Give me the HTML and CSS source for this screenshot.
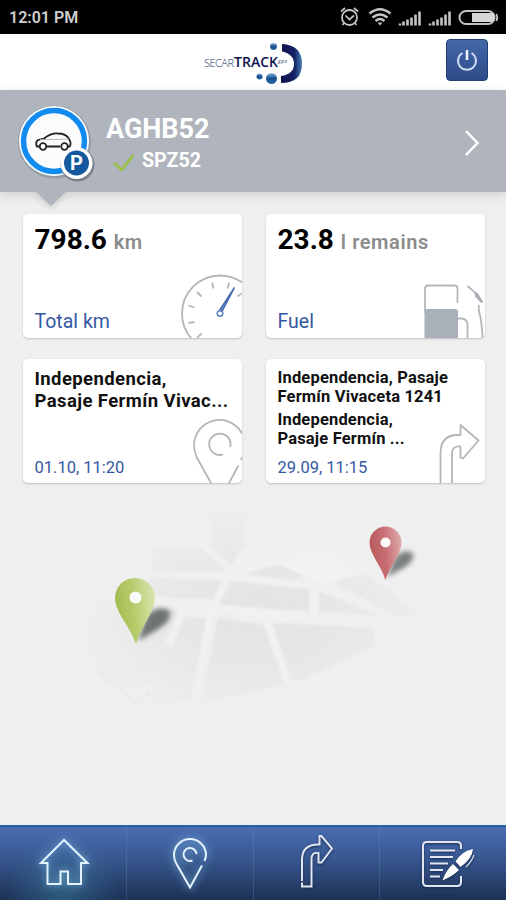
FILE: index.html
```html
<!DOCTYPE html>
<html lang="en">
<head>
    <meta charset="UTF-8">
    <meta name="viewport" content="width=device-width, initial-scale=1.0">
    <title>SecarTrack</title>
    <link rel="stylesheet" href="styles.css">
</head>
<body>
    <div class="status-bar">
        <span class="clock">12:01 PM</span>
        <svg class="status-icons" width="162" height="22" viewBox="0 0 162 22" fill="none" stroke="#c4c4c4">
            <!-- alarm -->
            <circle cx="9.5" cy="11.5" r="7.5" stroke-width="1.8"/>
            <path d="M5.5 9.5l4 4 4.5-4M1 5.5l4-3.5M18 5.5l-4-3.5M4 17l-1.5 2M15 17l1.5 2" stroke-width="1.7"/>
            <!-- wifi -->
            <path d="M29.5 7.5q10.5-8.5 21 0M32.5 11.5q7.5-6 15 0M35.5 15q4.5-4 9 0" stroke-width="2.4"/>
            <path d="M37.5 16.5h5l-2.5 3z" fill="#c4c4c4" stroke="none"/>
            <!-- signal -->
            <path d="M60 19.5v-2M63.5 19.5v-4M67.5 19.5v-6M71.5 19.5v-8M75.5 19.5v-11M79.5 19.5v-14" stroke-width="2.6"/>
            <path d="M90 19.5v-2M93.5 19.5v-4M97.5 19.5v-6M101.5 19.5v-8M105.5 19.5v-11M109.5 19.5v-14" stroke-width="2.6"/>
            <!-- battery -->
            <rect x="119.5" y="5" width="35" height="13" rx="6.5" stroke-width="2"/>
            <path d="M132 7h19.5q3 0 3 4.5t-3 4.5h-19.5z" fill="#d6d6d6" stroke="none"/>
            <path d="M156.5 8q1.5 3.5 0 7" stroke-width="1.8"/>
        </svg>
    </div>

    <header class="header">
        <svg class="logo" width="106" height="48" viewBox="0 0 106 48">
            <defs>
                <linearGradient id="arc" x1="0" y1="0" x2="1" y2="0">
                    <stop offset="0" stop-color="#10104f"/>
                    <stop offset=".65" stop-color="#132364"/>
                    <stop offset="1" stop-color="#4b7fba"/>
                </linearGradient>
                <linearGradient id="ball" x1="0" y1="0" x2="0" y2="1">
                    <stop offset="0" stop-color="#8db7d8"/>
                    <stop offset=".5" stop-color="#164f8e"/>
                    <stop offset="1" stop-color="#2c6ca8"/>
                </linearGradient>
            </defs>
            <path d="M82 4Q102 5 102 24T81 43V36Q94 34 94 24T82 11.500z" fill="url(#arc)"/>
            <circle cx="73.5" cy="6.5" r="3.4" fill="url(#ball)"/>
            <circle cx="59.5" cy="36.5" r="3" fill="url(#ball)"/>
            <circle cx="71.5" cy="38.5" r="5.5" fill="url(#ball)"/>
            <text class="logo-thin" x="4" y="27" textLength="30">SECAR</text>
            <text class="logo-bold" x="34" y="27" textLength="44">TRACK</text>
            <text class="logo-gps" x="78" y="23" textLength="9">gps</text>
        </svg>
        <button class="power-btn" type="button" aria-label="Log out">
            <svg width="26" height="26" viewBox="0 0 26 26" fill="none" stroke="#c9d9f2" stroke-width="2">
                <path d="M8.5 6A9 9 0 1 0 17.5 6"/>
                <path d="M13 3v10" stroke="#eef4ff" stroke-width="2.5"/>
            </svg>
        </button>
    </header>

    <section class="vehicle">
        <svg class="vehicle-icon" width="84" height="84" viewBox="0 0 84 84">
            <circle cx="38.5" cy="41" r="36.5" fill="#878d94" opacity=".65"/>
            <circle cx="38" cy="40" r="35" fill="#fff"/>
            <circle cx="38" cy="40" r="30.5" fill="#fbfbfb" stroke="#128bf0" stroke-width="5.5"/>
            <path d="M23.5 45.5h-2.5q-2-4 1-6.5l6-1.5q7-5.5 14-5 8 0 11 5.5 3 5 .5 7.5h-1.5M30.5 45.5h13.5" fill="none" stroke="#222" stroke-width="1.8"/>
            <path d="M24 38.5h19q6-.5 10-.5" fill="none" stroke="#aaa" stroke-width=".8"/>
            <circle cx="27" cy="45.5" r="3.3" fill="#fff" stroke="#222" stroke-width="1.8"/>
            <circle cx="48.5" cy="45.5" r="3.3" fill="#fff" stroke="#222" stroke-width="1.8"/>
            <circle cx="61.5" cy="63.5" r="17" fill="#6d747c" opacity=".8"/>
            <circle cx="60.5" cy="62" r="16" fill="#fff"/>
            <circle cx="60.5" cy="62" r="12.5" fill="#155a9f"/>
            <text class="parking" x="60.5" y="69" text-anchor="middle">P</text>
        </svg>
        <div class="vehicle-text">
            <div class="vehicle-name">AGHB52</div>
            <div class="vehicle-plate">
                <svg width="22" height="20" viewBox="0 0 22 20" fill="none" stroke="#96c23c" stroke-width="2.5">
                    <path d="M1 10l7.5 7L20.5 2"/>
                </svg>
                SPZ52
            </div>
        </div>
        <svg class="chevron" width="16" height="28" viewBox="0 0 16 28" fill="none" stroke="#fff" stroke-width="2.5">
            <path d="M2 2l11.5 12L2 26"/>
        </svg>
    </section>

    <main class="cards">
        <div class="card">
            <div class="value">798.6 <span class="unit">km</span></div>
            <div class="label">Total km</div>
            <svg class="card-icon" width="62" height="65" viewBox="0 0 62 65" fill="none" stroke="#b3b6b9" stroke-width="1.8">
                <circle cx="40" cy="40.5" r="38"/>
                <path d="M33.5 15.5l-1.5-6M47.5 15.5l1.5-6M21.5 23.5l-4.5-4.5M14.5 34.5l-6-2M14.5 49l-6 1M21.5 60.5l-4.5 4.5M57.5 23.5l4-3"/>
                <path d="M39.5 37.5L54.5 14.5 42 38.5" fill="#7795cc" stroke="#4469ae" stroke-width="1.5"/>
                <circle cx="40" cy="40.5" r="2.8" fill="#fff" stroke="#5a7fbd" stroke-width="1.5"/>
            </svg>
        </div>
        <div class="card">
            <div class="value">23.8 <span class="unit fuel">l remains</span></div>
            <div class="label">Fuel</div>
            <svg class="card-icon" width="62" height="55" viewBox="0 0 62 55" fill="none" stroke="#b3b7bb" stroke-width="1.8">
                <path d="M2 30V5.5Q2 2.5 5 2.5h26.5q3 0 3 3V20"/>
                <path d="M1.5 55V29q0-3 3-3h27.5q3 0 3 3v26z" fill="#aab0b8" stroke="none"/>
                <path d="M35 35.5h3.5q6 0 6 7V55M56 22q-1 5 1 10 2 9 2.5 23"/>
                <path d="M44.5 3l8 7 7 9"/>
                <path d="M51.5 9.5l3 0 6 10-3 0-5.5-6z" fill="#aab0b8" stroke="none"/>
            </svg>
        </div>
        <div class="card">
            <div class="address">Independencia,<br>Pasaje Fermín Vivac...</div>
            <div class="label date">01.10, 11:20</div>
            <svg class="card-icon" width="50" height="65" viewBox="0 0 50 65" fill="none" stroke="#b3b6b9" stroke-width="1.8">
                <path d="M19 65L4.5 39Q2 33 2 28A25.5 25.5 0 0 1 50 15.5M46.5 47.5L37 65M49 42l1-3"/>
                <path d="M38.2 29A10.7 10.7 0 1 0 31 36.5"/>
            </svg>
        </div>
        <div class="card">
            <div class="address small">Independencia, Pasaje<br>Fermín Vivaceta 1241</div>
            <div class="address small">Independencia,<br>Pasaje Fermín ...</div>
            <div class="label date">29.09, 11:15</div>
            <svg class="card-icon" width="47" height="60" viewBox="0 0 47 60" fill="none" stroke="#b3b6b9" stroke-width="1.8" stroke-linejoin="round">
                <path d="M2.5 60V29.5Q3 13 18 12h4.5V2L40.5 17.5 25 35.5 22.5 34.5V23.5Q14 22.5 14 31V60"/>
            </svg>
        </div>
    </main>

    <svg class="map" width="506" height="250" viewBox="0 0 506 250">
        <defs>
            <radialGradient id="fade" gradientUnits="userSpaceOnUse" cx="260" cy="120" r="185" gradientTransform="translate(0 48) scale(1 .6)">
                <stop offset="0" stop-color="#fff"/>
                <stop offset=".35" stop-color="#fff" stop-opacity=".8"/>
                <stop offset="1" stop-color="#fff" stop-opacity="0"/>
            </radialGradient>
            <mask id="map-mask"><rect width="506" height="250" fill="url(#fade)"/></mask>
            <linearGradient id="green" x1="0" y1=".6" x2="1" y2=".4">
                <stop offset="0" stop-color="#a0b94c"/>
                <stop offset=".5" stop-color="#b7cd6e"/>
                <stop offset="1" stop-color="#d6e4ac"/>
            </linearGradient>
            <linearGradient id="red" x1="0" y1=".6" x2="1" y2=".4">
                <stop offset="0" stop-color="#b9585d"/>
                <stop offset=".5" stop-color="#c76d72"/>
                <stop offset="1" stop-color="#dca9ab"/>
            </linearGradient>
            <filter id="blur" x="-30%" y="-30%" width="160%" height="160%"><feGaussianBlur stdDeviation="2.5"/></filter>
            <filter id="soften"><feGaussianBlur stdDeviation="1"/></filter>
        </defs>
        <g mask="url(#map-mask)" filter="url(#soften)">
            <path d="M155 51h49l26 24-80 2zM211 18h34v40l-12 14-22-21zM150 82l72 4-8 18-66-2zM229 86l80 6v24l-90-6zM319 96l59 24-59-3zM334 88l30-12 55 45-22 1zM100 106l80 10-14 60-50 36-45-40zM185 121l24 3-18 80-40 3 15-40zM218 123l46 7 21 60-84 18zM272 128l102 5v27l-80 30zM240 80l54-18 18 15-20 9z" fill="#e4e3e3"/>
            <path d="M272 67l55-17 42 27-44 12z" fill="#f4f4f4"/>
            <g fill="none" stroke="#f2f1f1" stroke-width="7">
                <path d="M150 79l84 3 85 10 75 30M150 104l80 10 60 9 98 5M228 84l-16 30-18 92M232 76l-30-27h-50l-12 30M233 75l12-22M267 126l22 65M314 93v34M201 215l95-24 95-42M183 116l-15 34"/>
                <path d="M234 79l94-30 62 42"/>
            </g>
        </g>
        <path d="M118 161l-20 15 40 34 12-14" fill="none" stroke="#ebebeb" stroke-width="3"/>
        <path d="M138 146l9-26q13-11 23-4 2 9-10 17z" fill="#3e4242" opacity=".7" filter="url(#blur)"/>
        <path d="M136 149C130 131 115 117 115 103a20 20 0 0 1 40 0C155 117 141 131 136 149z" fill="url(#green)"/>
        <circle cx="135.5" cy="102.5" r="6" fill="#fafafa"/>
        <path d="M387 82l8-20q10-9 18-4 2 7-8 14z" fill="#3e4242" opacity=".65" filter="url(#blur)"/>
        <path d="M385.5 85C381 70 369.5 59 369.5 47.5a16 16 0 0 1 32 0C401.5 59 390 70 385.5 85z" fill="url(#red)"/>
        <circle cx="385.5" cy="47.5" r="5" fill="#fafafa"/>
    </svg>

    <nav class="tabs">
        <a class="tab active" href="#" aria-label="Home">
            <svg width="60" height="60" viewBox="0 0 60 60" fill="none" stroke="#e2f3ff" stroke-width="2">
                <path d="M31 8L8 31h6.5v21h13V39.5h7.5V52h13V31h6.5z"/>
            </svg>
        </a>
        <a class="tab glow" href="#" aria-label="Location">
            <svg width="60" height="60" viewBox="0 0 60 60" fill="none" stroke="#e2f3ff" stroke-width="2">
                <path d="M44.5 29Q46 25 46 23A16 16 0 1 0 14 23Q14 27 16 31L30 55.5 42 33.5"/>
                <path d="M36.5 22A6.5 6.5 0 1 0 32.5 28.5"/>
            </svg>
        </a>
        <a class="tab" href="#" aria-label="Trips">
            <svg width="60" height="60" viewBox="0 0 60 60" fill="none" stroke="#e1e6f0" stroke-width="2">
                <path d="M16 50.5V54.5H25.5V27Q25.5 20 32.5 21v9.5h3L46 16.5 35.5 4h-2v8.5Q16.5 12 16 27v22"/>
            </svg>
        </a>
        <a class="tab" href="#" aria-label="Logbook">
            <svg width="60" height="60" viewBox="0 0 60 60" fill="none" stroke="#e1e6f0" stroke-width="2">
                <path d="M48 17v-3q0-4-4-4H14q-4 0-4 4v36q0 4 4 4h30q4 0 4-4v-6"/>
                <path d="M17 18.5h25M17 25h23M17 31.5h18M17 38h13M17 44.5h10"/>
                <path d="M29.5 48.5Q33 38 40 32l6 6Q40 44 29.5 48.5zM42.5 29.5Q49 19 60 17 59 27 47.5 35z" fill="#fff" stroke="none"/>
                <path d="M61 23q-2 6-8 12" stroke-width="1.2"/>
            </svg>
        </a>
    </nav>
</body>
</html>
```
FILE: styles.css
```css
* {
    box-sizing: border-box;
}
body {
    margin: 0;
    width: 506px;
    height: 900px;
    display: flex;
    flex-direction: column;
    background-color: #efefef;
    font-family: Roboto, "Liberation Sans", sans-serif;
    overflow: hidden;
}
svg {
    display: block;
    overflow: visible;
    flex: none;
}
.status-bar {
    height: 34px;
    padding: 0 4px 0 9px;
    display: flex;
    align-items: center;
    justify-content: space-between;
    background-color: #000;
    color: #cfcfcf;
}
.clock {
    font-size: 16px;
    font-weight: 600;
    line-height: 20px;
    padding-top: 2px;
}
.status-icons {
    overflow: hidden;
}
.header {
    height: 56px;
    padding: 5px 18px 0 200px;
    display: flex;
    align-items: flex-start;
    justify-content: space-between;
    background-color: #fff;
}
.logo-thin {
    font: 300 11px "Open Sans", sans-serif;
    fill: #27316b;
}
.logo-bold {
    font: 600 14px "Open Sans", sans-serif;
    fill: #10104f;
}
.logo-gps {
    font: italic 5px "Open Sans", sans-serif;
    fill: #27316b;
}
.logo {
    margin-top: 1px;
}
.power-btn {
    width: 42px;
    height: 42px;
    padding: 0;
    display: flex;
    align-items: center;
    justify-content: center;
    background: linear-gradient(#4467a8, #2c4b88);
    border: 1px solid #243e72;
    border-radius: 4px;
}
.vehicle {
    position: relative;
    height: 102px;
    padding: 11px 26px 0 16px;
    display: flex;
    background-color: #b0b5bd;
    box-shadow: 0 3px 10px rgba(0, 0, 0, .14);
}
.vehicle::after {
    content: "";
    position: absolute;
    left: 35px;
    top: 101px;
    border: 16px solid transparent;
    border-top: 15px solid #b0b5bd;
    border-bottom: 0;
    filter: drop-shadow(0 3px 3px rgba(0, 0, 0, .12));
}
.parking {
    font: bold 20px Roboto, sans-serif;
    fill: #fff;
}
.vehicle-text {
    flex: 1;
    padding: 12px 0 0 6px;
    color: #fff;
    font-weight: bold;
}
.vehicle-name {
    font-size: 27px;
    line-height: 32px;
}
.vehicle-plate {
    display: flex;
    align-items: center;
    gap: 7px;
    padding-left: 7px;
    font-size: 19.7px;
    line-height: 31px;
}
.vehicle-plate svg {
    margin-top: 4px;
}
.chevron {
    margin-top: 28px;
}
.cards {
    display: grid;
    grid-template-columns: 219px 219px;
    grid-template-rows: 124px 124px;
    gap: 21px 24px;
    padding: 21.5px 0 0 23px;
}
.card {
    position: relative;
    padding: 9px 12px 5px 11.5px;
    display: flex;
    flex-direction: column;
    background-color: #fff;
    border-radius: 5px;
    box-shadow: 0 1px 2px rgba(0, 0, 0, .2);
}
.card-icon {
    position: absolute;
    right: 0;
    bottom: 0;
    overflow: hidden;
    border-bottom-right-radius: 5px;
}
.value {
    font-size: 28px;
    line-height: 34px;
    font-weight: bold;
    color: #000;
}
.unit {
    font-size: 20px;
    font-weight: 600;
    letter-spacing: .3px;
    color: #8c8c8c;
}
.unit.fuel {
    letter-spacing: .6px;
}
.label {
    margin-top: auto;
    font-size: 19.5px;
    line-height: 23px;
    color: #3458a2;
}
.date {
    font-size: 16.5px;
    line-height: 20px;
}
.address {
    font-size: 18.5px;
    line-height: 22px;
    font-weight: bold;
    letter-spacing: .4px;
    color: #111;
    white-space: nowrap;
}
.address.small {
    font-size: 16.5px;
    line-height: 19px;
    letter-spacing: .17px;
    margin-bottom: 4px;
}
.map {
    margin-top: 12px;
}
.tabs {
    margin-top: auto;
    height: 75px;
    display: flex;
    background: linear-gradient(#4a6db2, #37568f 45%, #1c3154);
    border-top: 2px solid #2862a3;
}
.tab {
    flex: 1;
    padding-top: 5px;
    display: flex;
    justify-content: center;
    border-right: 1px solid rgba(120, 150, 200, .25);
}
.tab:last-child {
    border-right: none;
}
.tab svg {
    filter: drop-shadow(0 1px 1px #142a52);
}
.tab.active {
    background: radial-gradient(ellipse at bottom, rgba(70, 150, 180, .4), transparent 65%);
}
.tab.active svg,
.tab.glow svg {
    filter: drop-shadow(0 0 4px #8fd0f5);
}
```
